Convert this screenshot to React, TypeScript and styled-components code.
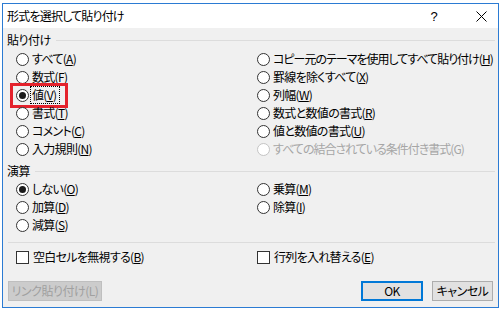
import styled, { createGlobalStyle } from "styled-components";

const GlobalStyle = createGlobalStyle`
  html, body {
    margin: 0;
    padding: 0;
    background: #ffffff;
  }
  body {
    font-family: "Noto Sans CJK JP", "Noto Sans", sans-serif;
    font-size: 12px;
    font-feature-settings: "palt";
    color: #000;
  }
`;

const Page = styled.div`
  width: 501px;
  height: 310px;
  box-sizing: border-box;
  padding: 3px 0 0 2px;
  background: #fff;
`;

const Dialog = styled.div`
  width: 497px;
  height: 305px;
  box-sizing: border-box;
  border: 1px solid #2b7bd3;
  background: #f0f0f0;
  display: flex;
  flex-direction: column;
`;

const TitleBar = styled.div`
  height: 24px;
  flex: none;
  background: #fff;
  display: flex;
  align-items: center;
  padding-left: 4px;
`;

const Title = styled.div`
  flex: 1;
  font-size: 12px;
  line-height: 24px;
  letter-spacing: -0.8px;
`;

const HelpMark = styled.div`
  width: 30px;
  text-align: center;
  font-family: "Liberation Sans", sans-serif;
  font-size: 13px;
  margin-right: 15px;
`;

const CloseMark = styled.div`
  width: 34px;
  height: 24px;
  display: flex;
  align-items: center;
  justify-content: center;
`;

const Body = styled.div`
  flex: 1;
  padding: 4px 3px 0 4px;
  display: flex;
  flex-direction: column;
`;

const GroupHeader = styled.div<{ $gap?: number }>`
  height: 16px;
  display: flex;
  align-items: center;
  gap: 5px;
  margin-top: ${p => p.$gap ?? 0}px;
  line-height: 16px;
  letter-spacing: -0.5px;

  &::after {
    content: "";
    flex: 1;
    height: 1px;
    background: #dcdcdc;
  }
`;

const Options = styled.div<{ $gap?: number }>`
  display: grid;
  grid-template-columns: 241px 1fr;
  align-items: start;
  margin: ${p => p.$gap ?? 0}px 0 0 9px;
`;

const Column = styled.div`
  display: flex;
  flex-direction: column;
  align-items: flex-start;
`;

const Item = styled.label<{ $disabled?: boolean; $marked?: boolean; $tight?: boolean }>`
  position: relative;
  height: 18px;
  display: inline-flex;
  align-items: center;
  gap: 3px;
  color: ${p => (p.$disabled ? "#a6a6a6" : "#000")};
  white-space: nowrap;
  line-height: 18px;
  letter-spacing: ${p => (p.$tight ? -1 : -0.7)}px;

  ${p =>
    p.$marked &&
    `&::before {
      content: "";
      position: absolute;
      top: -3px;
      left: -6px;
      right: -9px;
      bottom: -4px;
      border: 3px solid #e4222c;
    }`}
`;

const Radio = styled.span<{ $checked?: boolean; $disabled?: boolean }>`
  width: 13px;
  height: 13px;
  box-sizing: border-box;
  border-radius: 50%;
  border: 1px solid ${p => (p.$disabled ? "#c4c4c4" : "#333")};
  background: #fff;
  display: flex;
  align-items: center;
  justify-content: center;
  flex: none;

  &::after {
    content: "";
    display: ${p => (p.$checked ? "block" : "none")};
    width: 7px;
    height: 7px;
    border-radius: 50%;
    background: #1a1a1a;
  }
`;

const Check = styled.span`
  width: 13px;
  height: 13px;
  box-sizing: border-box;
  border: 1px solid #333;
  background: #fff;
  flex: none;
  margin-right: 1px;
`;

const Text = styled.span<{ $focus?: boolean }>`
  line-height: 16px;
  padding: ${p => (p.$focus ? "0 3px 0 1px" : "0")};
  margin-left: ${p => (p.$focus ? -1 : 0)}px;
  outline: ${p => (p.$focus ? "1px dotted #000" : "none")};
  outline-offset: 0;
`;

const Separator = styled.div`
  height: 1px;
  background: #dcdcdc;
  margin: 8px 0 0 1px;
`;

const CheckRow = styled.div`
  display: grid;
  grid-template-columns: 241px 1fr;
  height: 18px;
  margin: 5px 0 0 9px;
`;

const ButtonRow = styled.div`
  display: flex;
  align-items: center;
  margin: 15px 2px 0 1px;
`;

const Button = styled.button<{ $variant?: "default" | "disabled" | "normal"; $width: number }>`
  width: ${p => p.$width}px;
  height: 20px;
  box-sizing: border-box;
  padding: 0;
  font: inherit;
  font-size: 12px;
  line-height: 16px;
  letter-spacing: -0.5px;
  background: ${p => (p.$variant === "disabled" ? "#cccccc" : "#e1e1e1")};
  color: ${p => (p.$variant === "disabled" ? "#a0a0a0" : "#000")};
  border: ${p =>
    p.$variant === "default"
      ? "2px solid #0078d7"
      : p.$variant === "disabled"
      ? "1px solid #bfbfbf"
      : "1px solid #adadad"};
`;

const Spacer = styled.div`
  flex: 1;
`;

type Opt = {
  label: string;
  key?: string;
  checked?: boolean;
  disabled?: boolean;
  marked?: boolean;
  tight?: boolean;
};

const pasteLeft: Opt[] = [
  { label: "すべて", key: "A" },
  { label: "数式", key: "F" },
  { label: "値", key: "V", checked: true, marked: true },
  { label: "書式", key: "T" },
  { label: "コメント", key: "C" },
  { label: "入力規則", key: "N" },
];

const pasteRight: Opt[] = [
  { label: "コピー元のテーマを使用してすべて貼り付け", key: "H", tight: true },
  { label: "罫線を除くすべて", key: "X" },
  { label: "列幅", key: "W" },
  { label: "数式と数値の書式", key: "R" },
  { label: "値と数値の書式", key: "U" },
  { label: "すべての結合されている条件付き書式(G)", disabled: true, tight: true },
];

const opLeft: Opt[] = [
  { label: "しない", key: "O", checked: true },
  { label: "加算", key: "D" },
  { label: "減算", key: "S" },
];

const opRight: Opt[] = [
  { label: "乗算", key: "M" },
  { label: "除算", key: "I" },
];

function RadioItem({ opt }: { opt: Opt }) {
  return (
    <Item $disabled={opt.disabled} $marked={opt.marked} $tight={opt.tight}>
      <Radio $checked={opt.checked} $disabled={opt.disabled} />
      <Text $focus={opt.marked}>
        {opt.label}
        {opt.key && (
          <>
            (<u>{opt.key}</u>)
          </>
        )}
      </Text>
    </Item>
  );
}

function Group({ left, right }: { left: Opt[]; right: Opt[] }) {
  return (
    <>
      <Column>
        {left.map(o => (
          <RadioItem key={o.label} opt={o} />
        ))}
      </Column>
      <Column>
        {right.map(o => (
          <RadioItem key={o.label} opt={o} />
        ))}
      </Column>
    </>
  );
}

export default function App() {
  return (
    <Page>
      <GlobalStyle />
      <Dialog>
        <TitleBar>
          <Title>形式を選択して貼り付け</Title>
          <HelpMark>?</HelpMark>
          <CloseMark>
            <svg width="11" height="11" viewBox="0 0 11 11">
              <path d="M0.5 0.5 L10.5 10.5 M10.5 0.5 L0.5 10.5" stroke="#000" strokeWidth="1" />
            </svg>
          </CloseMark>
        </TitleBar>
        <Body>
          <GroupHeader>貼り付け</GroupHeader>
          <Options $gap={2}>
            <Group left={pasteLeft} right={pasteRight} />
          </Options>
          <GroupHeader $gap={5}>演算</GroupHeader>
          <Options $gap={1}>
            <Group left={opLeft} right={opRight} />
          </Options>
          <Separator />
          <CheckRow>
            <Item>
              <Check />
              <Text>
                空白セルを無視する(<u>B</u>)
              </Text>
            </Item>
            <Item>
              <Check />
              <Text>
                行列を入れ替える(<u>E</u>)
              </Text>
            </Item>
          </CheckRow>
          <ButtonRow>
            <Button $variant="disabled" $width={94} disabled>
              リンク貼り付け(L)
            </Button>
            <Spacer />
            <Button $variant="default" $width={62}>
              OK
            </Button>
            <Button $variant="normal" $width={61} style={{ marginLeft: 9 }}>
              キャンセル
            </Button>
          </ButtonRow>
        </Body>
      </Dialog>
    </Page>
  );
}
